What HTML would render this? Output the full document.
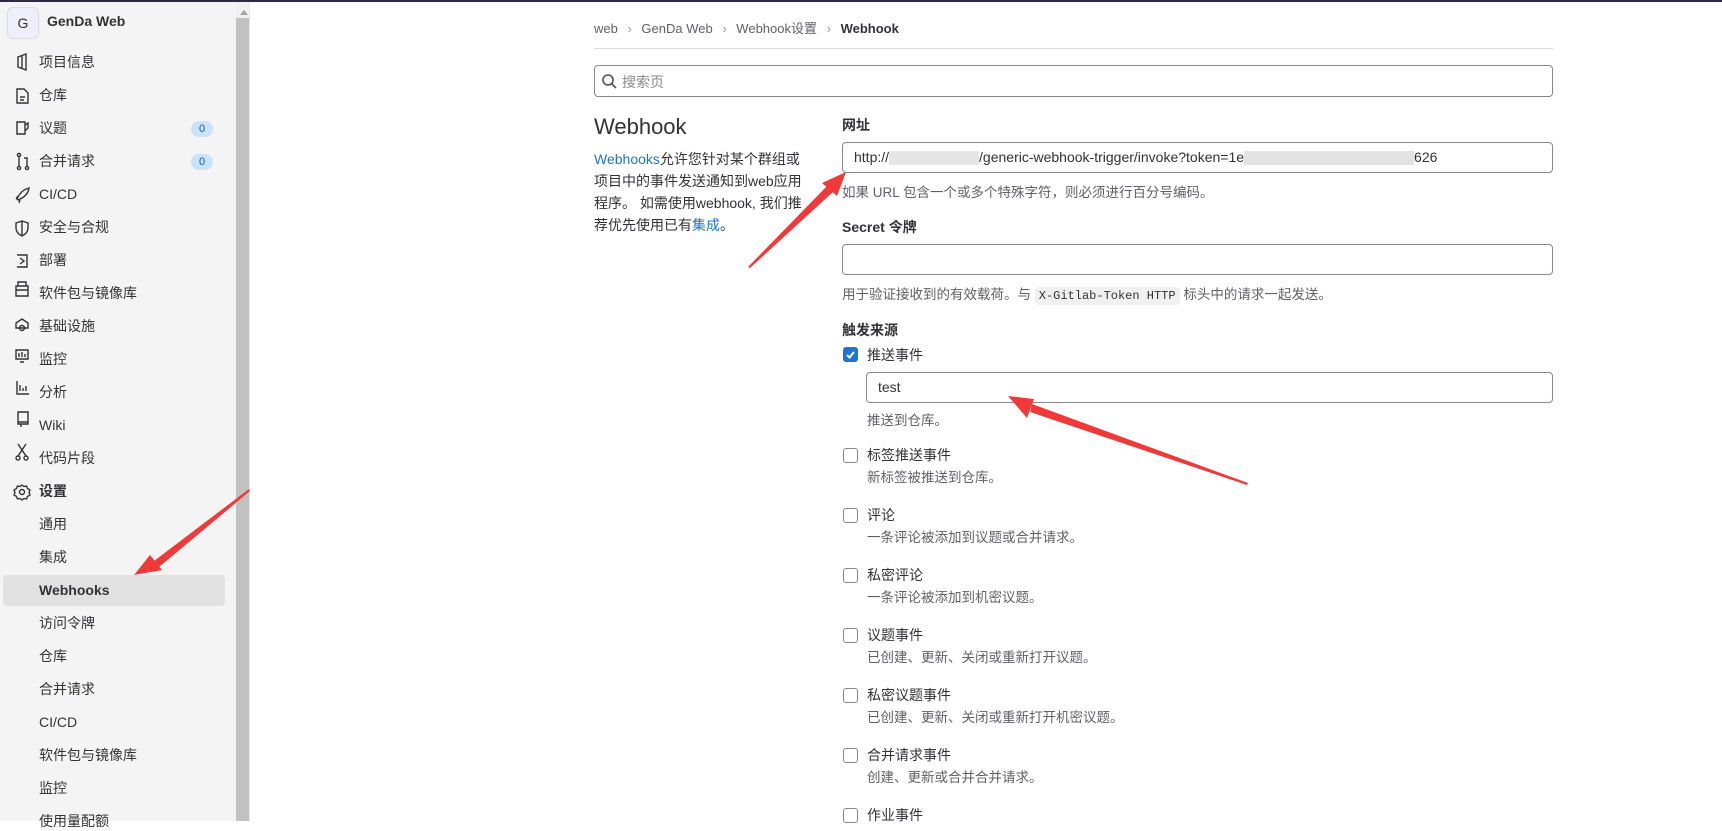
<!DOCTYPE html>
<html><head><meta charset="utf-8"><style>
*{box-sizing:border-box;margin:0;padding:0}
body{width:1722px;height:821px;overflow:hidden;background:#fff;font-family:"Liberation Sans","Noto Sans CJK SC",sans-serif;font-size:14px;color:#333238;position:relative}
.a{position:absolute;white-space:nowrap}
#top{left:0;top:0;width:1722px;height:2px;background:#2b2a4c}
#side{left:0;top:2px;width:236px;height:819px;background:#f4f4f4}
#sb{left:236px;top:2px;width:14px;height:819px;background:#f1f1f1;border-right:1px solid #e6e6e6}
#thumb{left:236px;top:18px;width:13px;height:803px;background:#c1c1c1}
.nav{left:39px;font-size:14px;line-height:20px;color:#333238}
.badge{left:191px;width:22px;height:16px;border-radius:8px;background:#cbe2f9;color:#0b5cad;font-size:11px;text-align:center;line-height:16px}
.inp{border:1px solid #89888d;border-radius:4px;background:#fff}
.hint{color:#626168;font-size:13.5px}
.cb{width:15px;height:15px;border:1px solid #89888d;border-radius:3px;background:#fff;left:843px}
.t{left:867px}
.d{left:867px;color:#626168;font-size:13.5px}
</style></head><body>
<div class="a" id="top"></div>
<div class="a" id="side"></div>
<div class="a" id="sb"></div>
<div class="a" id="thumb"></div>
<div class="a" style="left:240px;top:6px;width:0;height:0;border:4px solid transparent;border-bottom:5px solid #a3a3a3"></div>

<div class="a" style="left:7px;top:7px;width:32px;height:32px;border:1px solid #dcdcde;border-radius:6px;background:#eeeefc;text-align:center;line-height:30px;font-size:14px;color:#333">G</div>
<div class="a" style="left:47px;top:13px;font-size:14px;font-weight:bold;color:#333238">GenDa Web</div>

<svg class="a" style="left:0;top:0" width="236" height="821" fill="none" stroke="#333238" stroke-width="1.4">
<path d="M18 57 L26 54 L26 70 L18 67 Z M22 55.5 V68.5"/>
<path d="M17 89 h7 l4 4 v10 h-11 z M20 97 h5 M20 100 h4"/>
<path d="M17 122 h8 v12 h-8 z M25 125 l3 -2 v5 l-3 3"/>
<circle cx="19" cy="155" r="1.6"/><circle cx="19" cy="168" r="1.6"/><circle cx="27" cy="168" r="1.6"/><path d="M19 157 v9 M27 166 v-8 h-3"/>
<path d="M17 199 q4 -9 12 -11 q-1 8 -11 12 z M18 196 l-2 3 M20 200 l-1 3"/>
<path d="M22 221 l6 2 v5 q0 5 -6 8 q-6 -3 -6 -8 v-5 z M22 221 v15"/>
<path d="M17 255 h10 v12 h-10 M20 258 l4 3 -4 3"/>
<path d="M16 286 h12 v10 h-12 z M18 286 v-4 h8 v4 M16 290 h12"/>
<path d="M22 319 l6 4 v5 h-12 v-5 z"/><circle cx="22" cy="328" r="2.5"/>
<path d="M16 350 h12 v9 h-12 z M20 362 h4 M19 353 v4 M22 352 v5 M25 354 v3"/>
<path d="M17 381 v13 h12 M20 385 v6 M23 388 v3 M26 386 v5"/>
<path d="M18 412 h10 v12 h-10 z M18 422 h10 M21 424 v3"/>
<path d="M18 444 l8 12 M26 444 l-8 12"/><circle cx="18" cy="458" r="2"/><circle cx="26" cy="458" r="2"/>
<circle cx="22" cy="492" r="2.5"/><path d="M22 485 l2 1.5 2.5 -.5 1 2.5 2.5 1.5 -1 2.5 1 2.5 -2.5 1.5 -1 2.5 -2.5 -.5 -2 1.5 -2 -1.5 -2.5 .5 -1 -2.5 -2.5 -1.5 1 -2.5 -1 -2.5 2.5 -1.5 1 -2.5 2.5 .5 z"/>
</svg>

<div class="a nav" style="top:52px">项目信息</div>
<div class="a nav" style="top:85px">仓库</div>
<div class="a nav" style="top:118px">议题</div><div class="a badge" style="top:121px">0</div>
<div class="a nav" style="top:151px">合并请求</div><div class="a badge" style="top:154px">0</div>
<div class="a nav" style="top:184px">CI/CD</div>
<div class="a nav" style="top:217px">安全与合规</div>
<div class="a nav" style="top:250px">部署</div>
<div class="a nav" style="top:283px">软件包与镜像库</div>
<div class="a nav" style="top:316px">基础设施</div>
<div class="a nav" style="top:349px">监控</div>
<div class="a nav" style="top:382px">分析</div>
<div class="a nav" style="top:415px">Wiki</div>
<div class="a nav" style="top:448px">代码片段</div>
<div class="a nav" style="top:481px;font-weight:bold">设置</div>
<div class="a nav" style="top:514px">通用</div>
<div class="a nav" style="top:547px">集成</div>
<div class="a" style="left:3px;top:575px;width:222px;height:31px;background:#e1e1e1;border-radius:4px"></div>
<div class="a nav" style="top:580px;font-weight:bold">Webhooks</div>
<div class="a nav" style="top:613px">访问令牌</div>
<div class="a nav" style="top:646px">仓库</div>
<div class="a nav" style="top:679px">合并请求</div>
<div class="a nav" style="top:712px">CI/CD</div>
<div class="a nav" style="top:745px">软件包与镜像库</div>
<div class="a nav" style="top:778px">监控</div>
<div class="a nav" style="top:811px">使用量配额</div>

<div class="a" style="left:594px;top:18px;font-size:13px;color:#626168">web <span style="color:#999;margin:0 6px">›</span> GenDa Web <span style="color:#999;margin:0 6px">›</span> Webhook设置 <span style="color:#999;margin:0 6px">›</span> <b style="color:#333238">Webhook</b></div>
<div class="a" style="left:594px;top:48px;width:959px;height:1px;background:#dcdcde"></div>
<div class="a inp" style="left:594px;top:65px;width:959px;height:32px"></div>
<svg class="a" style="left:601px;top:73px" width="16" height="16" fill="none" stroke="#535158" stroke-width="1.6"><circle cx="7" cy="7" r="5"/><path d="M11 11 l4 4"/></svg>
<div class="a" style="left:622px;top:72px;color:#89888d;font-size:14px">搜索页</div>

<div class="a" style="left:594px;top:114px;font-size:22px;color:#333238">Webhook</div>
<div class="a" style="left:594px;top:148px;width:215px;white-space:normal;line-height:22px;font-size:14px;color:#333238"><span style="color:#1f75cb">Webhooks</span>允许您针对某个群组或项目中的事件发送通知到web应用程序。 如需使用webhook, 我们推荐优先使用已有<span style="color:#1f75cb">集成</span>。</div>

<div class="a" style="left:842px;top:115px;font-weight:bold">网址</div>
<div class="a inp" style="left:842px;top:142px;width:711px;height:31px"></div>
<div class="a" style="left:854px;top:149px;font-size:14px">http://<span style="display:inline-block;width:90px;height:14px;background:#e6e6e6;vertical-align:middle"></span>/generic-webhook-trigger/invoke?token=1e<span style="display:inline-block;width:170px;height:14px;background:#e3e3e3;vertical-align:middle"></span>626</div>
<div class="a hint" style="left:842px;top:181px">如果 URL 包含一个或多个特殊字符，则必须进行百分号编码。</div>
<div class="a" style="left:842px;top:217px;font-weight:bold">Secret 令牌</div>
<div class="a inp" style="left:842px;top:244px;width:711px;height:31px"></div>
<div class="a hint" style="left:842px;top:283px">用于验证接收到的有效载荷。与 <span style="font-family:'Liberation Mono',monospace;font-size:12px;background:#f0f0f0;padding:2px 4px;border-radius:3px;color:#333">X-Gitlab-Token HTTP</span> 标头中的请求一起发送。</div>
<div class="a" style="left:842px;top:320px;font-weight:bold">触发来源</div>
<div class="a cb" style="top:347px;background:#1f75cb;border-color:#1f75cb"></div>
<svg class="a" style="left:843px;top:347px" width="15" height="15" fill="none" stroke="#fff" stroke-width="2"><path d="M4 8 l2.5 2.5 L11 5"/></svg>
<div class="a t" style="top:345px">推送事件</div>
<div class="a inp" style="left:866px;top:372px;width:687px;height:31px"></div>
<div class="a" style="left:878px;top:379px">test</div>
<div class="a d" style="top:409px">推送到仓库。</div>

<div class="a cb" style="top:448px"></div><div class="a t" style="top:445px">标签推送事件</div><div class="a d" style="top:466px">新标签被推送到仓库。</div>
<div class="a cb" style="top:508px"></div><div class="a t" style="top:505px">评论</div><div class="a d" style="top:526px">一条评论被添加到议题或合并请求。</div>
<div class="a cb" style="top:568px"></div><div class="a t" style="top:565px">私密评论</div><div class="a d" style="top:586px">一条评论被添加到机密议题。</div>
<div class="a cb" style="top:628px"></div><div class="a t" style="top:625px">议题事件</div><div class="a d" style="top:646px">已创建、更新、关闭或重新打开议题。</div>
<div class="a cb" style="top:688px"></div><div class="a t" style="top:685px">私密议题事件</div><div class="a d" style="top:706px">已创建、更新、关闭或重新打开机密议题。</div>
<div class="a cb" style="top:748px"></div><div class="a t" style="top:745px">合并请求事件</div><div class="a d" style="top:766px">创建、更新或合并合并请求。</div>
<div class="a cb" style="top:808px"></div><div class="a t" style="top:805px">作业事件</div>

<svg class="a" style="left:0;top:0" width="1722" height="821">
<g fill="#f03a3a">
<polygon points="748,267 750,268 834,191 828,185"/>
<polygon points="846,172 822,183 837,196"/>
<polygon points="1248,483 1247,485 1030,412 1032,404"/>
<polygon points="1008,396 1034,399 1027,418"/>
<polygon points="250,491 249,489 154,561 159,567"/>
<polygon points="134,575 150,555 162,570"/>
</g>
</svg>
</body></html>
